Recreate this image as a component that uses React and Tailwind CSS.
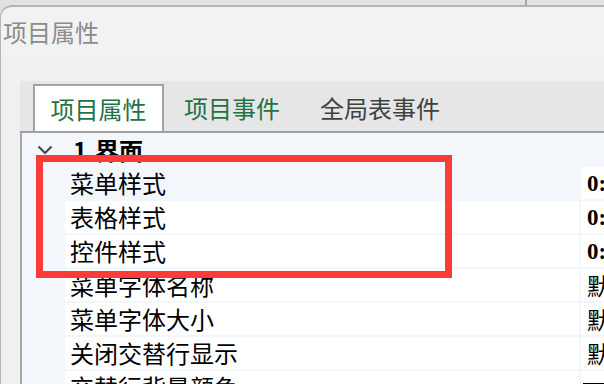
import React from "react";

const rows = [
  { name: "菜单样式", value: "0:", bold: true, shaded: true },
  { name: "表格样式", value: "0:", bold: true },
  { name: "控件样式", value: "0:", bold: true },
  { name: "菜单字体名称", value: "默认" },
  { name: "菜单字体大小", value: "默认" },
  { name: "关闭交替行显示", value: "默认" },
  { name: "交替行背景颜色", swatch: true },
];

export default function App() {
  return (
    <div className="relative w-[604px] h-[384px] overflow-hidden bg-[#e2e2e2] font-['Noto_Sans_CJK_SC','Noto_Sans',sans-serif]">
      {/* window strip above */}
      <div className="flex h-[5px]">
        <div className="w-[525px]" />
        <div className="w-[2px] bg-[#a9a9a9]" />
      </div>

      <div className="h-full border-t-2 border-l border-[#b4b4b4] rounded-tl-[12px] bg-[#f2f2f2]">
        {/* title */}
        <div className="h-[50px] flex items-center pl-[2px] text-[24px] leading-none text-[#8c8c8c]">
          项目属性
        </div>

        <div className="h-full bg-[#f0f0f0] pl-[19px] pt-[24px]">
          {/* tabs */}
          <div className="flex items-end h-[52px] pl-[13px] bg-[#e6e6e6] border-b-2 border-[#a0a0a0]">
            <div className="h-[47px] w-[131px] flex items-center justify-center bg-white border-t-2 border-x-2 border-[#a3a3a3] text-[24px] leading-none text-[#217346]">
              项目属性
            </div>
            <div className="h-[47px] px-[20px] flex items-center text-[24px] leading-none text-[#217346]">
              项目事件
            </div>
            <div className="h-[47px] px-[20px] flex items-center text-[24px] leading-none text-[#404040]">
              全局表事件
            </div>
          </div>

          {/* property grid */}
          <div className="h-full border-l-2 border-[#a8a8a8] bg-[#f3f6fb] text-black">
            <div className="h-[34px] flex items-center">
              <div className="w-[43px] flex justify-center pl-[2px]">
                <svg width="16" height="10" viewBox="0 0 16 10">
                  <path d="M1.5 1.5 L8 8 L14.5 1.5" fill="none" stroke="#4a4a4a" strokeWidth="2.2" />
                </svg>
              </div>
              <span className="pl-[8px] text-[24px] leading-none font-bold">1.界面</span>
            </div>

            {rows.map((r) => (
              <div key={r.name} className="h-[34px] flex border-b-2 border-[#f3f6fb]">
                <div className="w-[43px] shrink-0" />
                <div
                  className={`w-[514px] shrink-0 flex items-center pl-[5px] text-[24px] leading-none ${
                    r.shaded ? "bg-[#f3f6fb]" : "bg-white"
                  }`}
                >
                  {r.name}
                </div>
                <div className="w-[2px] shrink-0" />
                <div className="flex-1 bg-white flex items-center pl-[6px]">
                  {r.swatch ? (
                    <div className="mt-[14px] -ml-[4px] w-[26px] h-[22px] border-2 border-black" />
                  ) : (
                    <span
                      className={`text-[23px] leading-none whitespace-nowrap ${
                        r.bold ? "font-bold font-['Liberation_Serif',serif]" : ""
                      }`}
                    >
                      {r.value}
                    </span>
                  )}
                </div>
              </div>
            ))}
          </div>
        </div>
      </div>

      {/* highlight box */}
      <div className="absolute left-[36px] top-[155px] w-[416px] h-[123px] border-[7px] border-[#fb3a3a]" />
    </div>
  );
}
